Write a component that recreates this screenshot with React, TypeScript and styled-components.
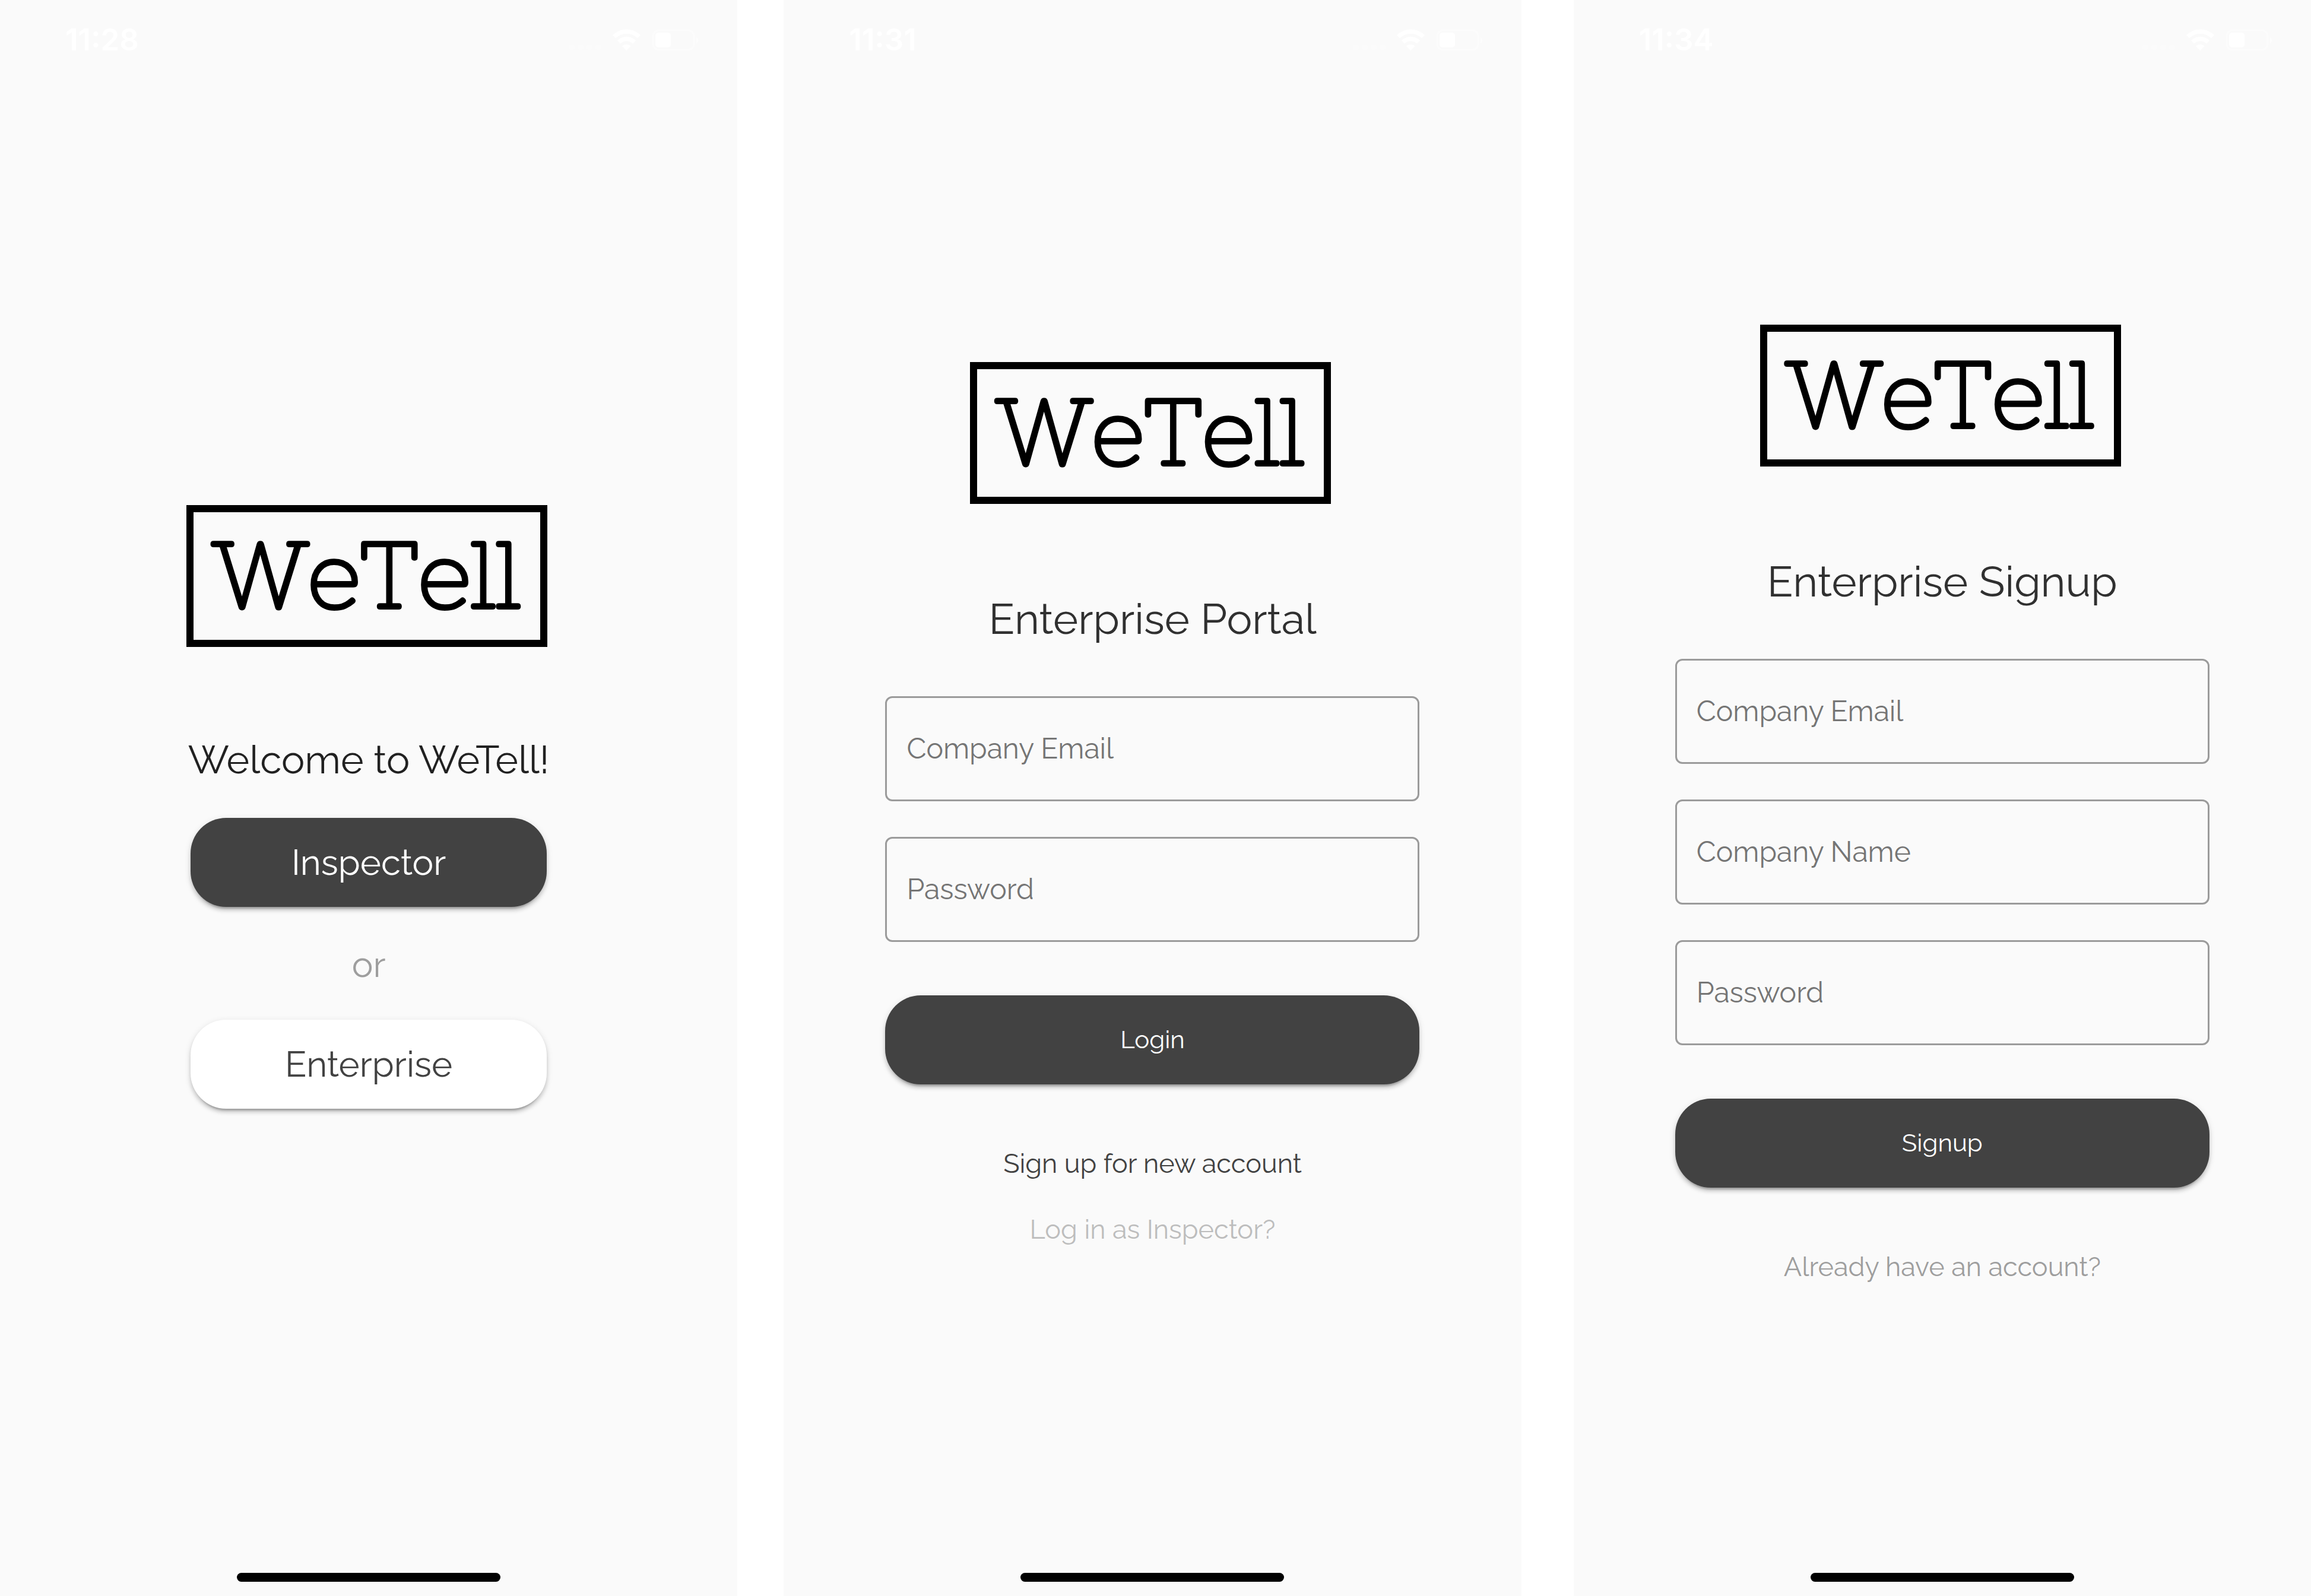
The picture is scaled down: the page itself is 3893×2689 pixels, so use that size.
import React, { useId } from "react";
import styled, { createGlobalStyle, css } from "styled-components";

const colors = {
  surface: "#fafafa",
  ink: "#212121",
  heading: "#303030",
  dark: "#424242",
  label: "#757575",
  muted: "#9e9e9e",
  faint: "#bdbdbd",
  outline: "#9b9b9b",
};

const GlobalStyle = createGlobalStyle`
  *, *::before, *::after { box-sizing: border-box; }
  body {
    margin: 0;
    background: #ffffff;
    font-family: Raleway, Lato, "Open Sans", sans-serif;
  }
`;

const Board = styled.div`
  display: flex;
  min-height: 100vh;
`;

const Screen = styled.section<{ $before?: number }>`
  flex: 1 1 0;
  min-width: 0;
  display: flex;
  flex-direction: column;
  margin-left: ${(p) => p.$before ?? 0}px;
  background: ${colors.surface};
`;

const StatusBar = styled.header`
  display: flex;
  align-items: center;
  justify-content: space-between;
  height: 134px;
  padding: 0 64px 0 110px;
  color: #ffffff;
`;

const Clock = styled.time`
  font: 600 51px/60px Inter, sans-serif;
`;

const StatusIcons = styled.svg`
  display: block;
  width: 220px;
  height: 40px;
`;

const Content = styled.main`
  flex: 1;
  display: flex;
  flex-direction: column;
  align-items: center;
  justify-content: center;
  width: 100%;
  max-width: 948px;
  margin: 0 auto;
  padding: 0 24px;
`;

const HomeArea = styled.footer`
  display: flex;
  align-items: flex-end;
  justify-content: center;
  height: 105px;
  padding-bottom: 24px;
`;

const HomeIndicator = styled.div`
  width: 444px;
  height: 15px;
  border-radius: 8px;
  background: #000000;
`;

const Logo = styled.div`
  display: flex;
  align-items: center;
  justify-content: center;
  width: 608px;
  height: 239px;
  margin-right: 6px;
  padding-bottom: 4px;
  border: 12px solid #000000;
  color: #000000;
  font: 400 157px/190px "Nixie One", "DejaVu Serif", serif;
  font-kerning: none;
  stroke-linejoin: round;
  -webkit-text-stroke: 6px #000000;
`;

const Welcome = styled.h1`
  margin: 148px 0 56px;
  color: ${colors.ink};
  font-size: 66px;
  font-weight: 400;
  line-height: 84px;
  white-space: nowrap;
`;

const Title = styled.h1`
  margin: 152px 0 88px;
  color: ${colors.heading};
  font-size: 72px;
  font-weight: 400;
  line-height: 84px;
  white-space: nowrap;
`;

const raised = css`
  box-shadow:
    0 9px 3px -6px rgba(0, 0, 0, 0.2),
    0 6px 6px rgba(0, 0, 0, 0.14),
    0 3px 12px rgba(0, 0, 0, 0.12);
`;

const PillButton = styled.button<{ $light?: boolean; $wide?: boolean }>`
  width: 100%;
  max-width: ${(p) => (p.$wide ? "900px" : "600px")};
  height: 150px;
  padding: 0;
  border: 0;
  border-radius: 60px;
  background: ${(p) => (p.$light ? "#ffffff" : colors.dark)};
  color: ${(p) => (p.$light ? colors.dark : "#ffffff")};
  font-family: inherit;
  font-size: ${(p) => (p.$wide ? 42 : 60)}px;
  cursor: pointer;
  ${raised}
`;

const Or = styled.p`
  margin: 60px 0 56px;
  color: ${colors.muted};
  font-size: 60px;
  line-height: 74px;
`;

const Form = styled.form`
  display: flex;
  flex-direction: column;
  gap: 60px;
  width: 100%;
`;

const Submit = styled.div`
  display: flex;
  padding-top: 30px;
`;

const FieldBox = styled.div`
  display: grid;
  align-items: center;
  height: 177px;
  border: 3px solid ${colors.outline};
  border-radius: 12px;

  & > * {
    grid-area: 1 / 1;
  }
`;

const FieldLabel = styled.label`
  padding: 0 33px;
  color: ${colors.label};
  font-size: 48px;
  line-height: 60px;
  pointer-events: none;
`;

const FieldInput = styled.input`
  width: 100%;
  height: 100%;
  padding: 0 33px;
  border: 0;
  outline: 0;
  background: transparent;
  color: ${colors.ink};
  font: inherit;
  font-size: 48px;

  &:focus + label,
  &:not(:placeholder-shown) + label {
    visibility: hidden;
  }
`;

const Links = styled.nav`
  display: flex;
  flex-direction: column;
  align-items: center;
  gap: 37px;
  margin-top: 97px;
`;

const TextLink = styled.a<{ $color: string }>`
  color: ${(p) => p.$color};
  font-size: 45px;
  line-height: 74px;
  text-decoration: none;
`;

function Field({ label, type }: { label: string; type: string }) {
  const id = useId();
  return (
    <FieldBox>
      <FieldInput id={id} type={type} placeholder=" " />
      <FieldLabel htmlFor={id}>{label}</FieldLabel>
    </FieldBox>
  );
}

function PhoneScreen({
  time,
  before,
  children,
}: {
  time: string;
  before?: number;
  children: React.ReactNode;
}) {
  return (
    <Screen $before={before}>
      <StatusBar>
        <Clock>{time}</Clock>
        <StatusIcons viewBox="0 0 220 40" fill="currentColor" aria-hidden="true">
          <g opacity="0.3">
            <rect x="0" y="28" width="10" height="9" rx="3" />
            <rect x="15" y="28" width="10" height="9" rx="3" />
            <rect x="30" y="28" width="10" height="9" rx="3" />
            <rect x="45" y="28" width="10" height="9" rx="3" />
          </g>
          <path d="M74 12a34 34 0 0 1 47 0l-5 5.500a26 26 0 0 0-37 0z" />
          <path d="M82 21a22.500 22.500 0 0 1 31 0l-5 5.500a15 15 0 0 0-21 0z" />
          <path d="M90 30.500a11 11 0 0 1 14.500 0l-7.250 8z" />
          <rect x="142" y="4" width="69" height="33" rx="10" fill="none" stroke="currentColor" strokeWidth="3" opacity="0.4" />
          <rect x="146" y="8" width="26" height="25" rx="5" />
          <path d="M215 15q7 6 0 12z" opacity="0.5" />
        </StatusIcons>
      </StatusBar>
      <Content>
        <Logo>WeTell</Logo>
        {children}
      </Content>
      <HomeArea>
        <HomeIndicator />
      </HomeArea>
    </Screen>
  );
}

export default function App() {
  return (
    <>
      <GlobalStyle />
      <Board>
        <PhoneScreen time="11:28">
          <Welcome>Welcome to WeTell!</Welcome>
          <PillButton type="button">Inspector</PillButton>
          <Or>or</Or>
          <PillButton type="button" $light>
            Enterprise
          </PillButton>
        </PhoneScreen>

        <PhoneScreen time="11:31" before={78}>
          <Title>Enterprise Portal</Title>
          <Form>
            <Field label="Company Email" type="email" />
            <Field label="Password" type="password" />
            <Submit>
              <PillButton type="button" $wide>
                Login
              </PillButton>
            </Submit>
          </Form>
          <Links>
            <TextLink href="#signup" $color={colors.dark}>
              Sign up for new account
            </TextLink>
            <TextLink href="#inspector" $color={colors.faint}>
              Log in as Inspector?
            </TextLink>
          </Links>
        </PhoneScreen>

        <PhoneScreen time="11:34" before={88}>
          <Title>Enterprise Signup</Title>
          <Form>
            <Field label="Company Email" type="email" />
            <Field label="Company Name" type="text" />
            <Field label="Password" type="password" />
            <Submit>
              <PillButton type="button" $wide>
                Signup
              </PillButton>
            </Submit>
          </Form>
          <Links>
            <TextLink href="#login" $color={colors.muted}>
              Already have an account?
            </TextLink>
          </Links>
        </PhoneScreen>
      </Board>
    </>
  );
}
